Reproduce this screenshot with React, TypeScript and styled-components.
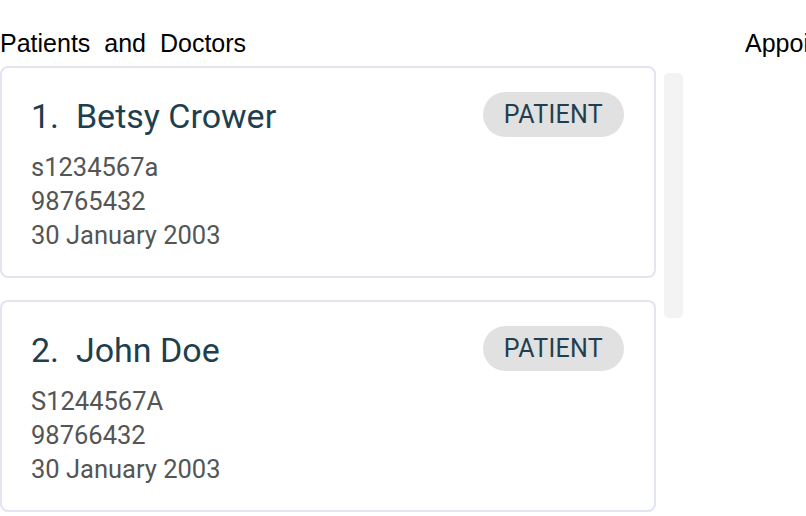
import React from "react";
import styled, { createGlobalStyle } from "styled-components";

const Global = createGlobalStyle`
  html, body { margin: 0; padding: 0; background: #ffffff; overflow: hidden; }
  body { width: 806px; height: 516px; }
`;

const Page = styled.div`
  display: flex;
  width: 806px;
  height: 516px;
  overflow: hidden;
`;

const LeftPane = styled.section`
  width: 690px;
  flex: none;
  display: flex;
  flex-direction: column;
`;

const RightPane = styled.section`
  flex: 1;
  min-width: 0;
  padding-left: 55px;
  overflow: hidden;
`;

const PaneTitle = styled.h2`
  margin: 0;
  height: 66px;
  padding-top: 31px;
  box-sizing: border-box;
  font-family: "Liberation Sans", Arial, sans-serif;
  font-weight: 400;
  font-size: 25px;
  line-height: 25px;
  word-spacing: 7px;
  color: #000000;
  white-space: nowrap;
  overflow: hidden;
`;

const ListArea = styled.div`
  display: flex;
  gap: 8px;
  align-items: flex-start;
`;

const CardList = styled.div`
  width: 656px;
  display: flex;
  flex-direction: column;
  gap: 22px;
`;

const ScrollTrack = styled.div`
  margin-top: 7px;
  width: 19px;
  height: 245px;
  border-radius: 5px;
  background: #f3f3f3;
`;

const Card = styled.article`
  box-sizing: border-box;
  height: 212px;
  border: 2px solid #e3e4f2;
  border-radius: 8px;
  padding: 24px 30px 0 29px;
  display: flex;
  flex-direction: column;
  font-family: Roboto, "Noto Sans", sans-serif;
`;

const CardHead = styled.div`
  display: flex;
  justify-content: space-between;
  align-items: flex-start;
  height: 58px;
`;

const Name = styled.div`
  font-size: 34px;
  line-height: 48px;
  color: #1f3f4f;
  white-space: pre;
`;

const Badge = styled.span`
  box-sizing: border-box;
  height: 45px;
  padding: 0 21px;
  border-radius: 23px;
  background: #e1e1e1;
  color: #1f3f4f;
  font-size: 25px;
  line-height: 46px;
  letter-spacing: 0.3px;
`;

const Detail = styled.div`
  font-size: 25.5px;
  line-height: 34px;
  color: #555555;
`;

type Person = { name: string; id: string; phone: string; dob: string; role: string };

const people: Person[] = [
  { name: "Betsy Crower", id: "s1234567a", phone: "98765432", dob: "30 January 2003", role: "PATIENT" },
  { name: "John Doe", id: "S1244567A", phone: "98766432", dob: "30 January 2003", role: "PATIENT" },
];

export default function App() {
  return (
    <Page>
      <Global />
      <LeftPane>
        <PaneTitle>Patients and Doctors</PaneTitle>
        <ListArea>
          <CardList>
            {people.map((p, i) => (
              <Card key={p.id}>
                <CardHead>
                  <Name>{`${i + 1}.  ${p.name}`}</Name>
                  <Badge>{p.role}</Badge>
                </CardHead>
                <Detail>{p.id}</Detail>
                <Detail>{p.phone}</Detail>
                <Detail>{p.dob}</Detail>
              </Card>
            ))}
          </CardList>
          <ScrollTrack />
        </ListArea>
      </LeftPane>
      <RightPane>
        <PaneTitle>Appointments</PaneTitle>
      </RightPane>
    </Page>
  );
}
